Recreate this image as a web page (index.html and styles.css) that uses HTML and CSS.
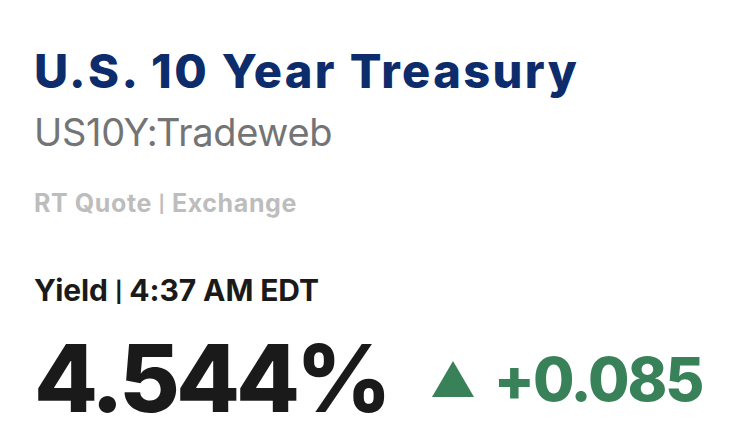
FILE: index.html
```html
<!DOCTYPE html>
<html lang="en">
<head>
    <meta charset="UTF-8">
    <meta name="viewport" content="width=device-width, initial-scale=1.0">
    <title>U.S. 10 Year Treasury</title>
    <link rel="stylesheet" href="styles.css">
</head>
<body>

    <div class="quote">
        <h1 class="quote-name">U.S. 10 Year Treasury</h1>
        <div class="quote-symbol">US10Y:Tradeweb</div>
        <div class="quote-source">RT Quote <span class="sep">|</span> Exchange</div>

        <div class="quote-time">Yield <span class="sep">|</span> 4:37 AM EDT</div>
        <div class="quote-price">
            <span class="price-last">4.544%</span>
            <span class="price-change up">
                <svg class="arrow" width="42" height="36" viewBox="0 0 42 36">
                    <polygon points="21,0 42,36 0,36" fill="currentColor"/>
                </svg>
                <span class="change-value">+0.085</span>
            </span>
        </div>
    </div>

</body>
</html>
```
FILE: styles.css
```css
* {
    margin: 0;
    padding: 0;
    box-sizing: border-box;
}

body {
    background-color: #fff;
    font-family: Inter, "Open Sans", Arial, sans-serif;
    overflow: hidden;
}

.quote {
    padding: 47px 0 0 34px;
}

/* short pipe between labels */
.sep {
    font-size: 0.68em;
    vertical-align: 0.12em;
}

/* Header */
.quote-name {
    font-size: 47px;
    font-weight: 800;
    line-height: 1;
    letter-spacing: 2.4px;
    color: #0d2c6c;
}

.quote-symbol {
    margin-top: 19px;
    font-size: 38px;
    font-weight: 400;
    line-height: 1;
    letter-spacing: -0.3px;
    color: #747474;
}

.quote-source {
    margin-top: 40px;
    font-size: 25px;
    font-weight: 700;
    line-height: 1;
    letter-spacing: 0.6px;
    color: #bdbdbd;
}

/* Price */
.quote-time {
    margin-top: 59px;
    font-size: 30px;
    font-weight: 700;
    line-height: 1;
    letter-spacing: -0.1px;
    color: #1a1a1a;
}

.quote-price {
    margin-top: 27px;
    display: flex;
    align-items: center;
}

.price-last {
    font-size: 93px;
    font-weight: 800;
    line-height: 1;
    letter-spacing: -4px;
    color: #1a1a1a;
}

.price-change {
    display: flex;
    align-items: center;
    margin-left: 44px;
}

.price-change.up {
    color: #398259;
}

.arrow {
    display: block;
}

.change-value {
    margin-left: 20px;
    font-size: 60px;
    font-weight: 800;
    line-height: 1;
    letter-spacing: -2px;
}
```
